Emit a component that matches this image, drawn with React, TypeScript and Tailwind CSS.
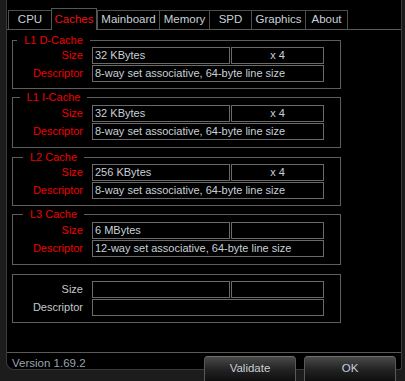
const tabs = [
  { name: 'CPU', w: 'w-[43px]' },
  { name: 'Caches', w: 'w-[46px]', active: true },
  { name: 'Mainboard', w: 'w-[62px]' },
  { name: 'Memory', w: 'w-[50px]' },
  { name: 'SPD', w: 'w-[42px]' },
  { name: 'Graphics', w: 'w-[54px]' },
  { name: 'About', w: 'w-[43px]', last: true },
];

interface CacheGroupProps {
  title?: string;
  size?: string;
  count?: string;
  descriptor?: string;
  h: string;
  mt: string;
}

function CacheGroup({ title, size, count, descriptor, h, mt }: CacheGroupProps) {
  const labelColor = title ? 'text-[#f00000]' : 'text-[#c4c8cc]';
  return (
    <div className={`relative w-[329px] ${h} ${mt} border border-[#5e5e5e] flex flex-col justify-center`}>
      {title && (
        <div className="absolute left-0 top-[-8px] w-[81px] flex justify-center">
          <span className="bg-black px-[7px] leading-[14px] text-[#f00000]">{title}</span>
        </div>
      )}
      <div className="flex items-center">
        <div className={`w-[70px] text-right ${labelColor}`}>Size</div>
        <div className="ml-[9px] w-[138px] h-[17px] border border-[#6a6a6a] pl-[2px] leading-[15px] text-[#c8d0d8]">
          {size}
        </div>
        <div className="ml-[1px] w-[93px] h-[17px] border border-[#6a6a6a] text-center leading-[15px] text-[#c8d0d8]">
          {count}
        </div>
      </div>
      <div className="flex items-center mt-[1px]">
        <div className={`w-[70px] text-right ${labelColor}`}>Descriptor</div>
        <div className="ml-[9px] w-[232px] h-[17px] border border-[#6a6a6a] pl-[2px] leading-[15px] text-[#c8d0d8]">
          {descriptor}
        </div>
      </div>
    </div>
  );
}

function App() {
  return (
    <div
      className="w-[405px] h-[381px] bg-[#1c1c1c] overflow-hidden text-[11px]"
      style={{ fontFamily: '"Liberation Sans", Arial, sans-serif' }}
    >
      <div className="ml-[6px] w-[396px] h-[370px] bg-black border-x border-b border-[#3a3a3a] rounded-bl-[8px] rounded-br-[3px] pt-[8px]">
        {/* tabs */}
        <div className="flex items-end h-[21px] ml-[1px]">
          {tabs.map((t) =>
            t.active ? (
              <div
                key={t.name}
                className={`${t.w} h-[22px] mb-[-1px] relative z-10 bg-black border-t border-l border-r border-[#565656] flex items-center justify-center text-[#f01010] text-[11.5px]`}
              >
                {t.name}
              </div>
            ) : (
              <div
                key={t.name}
                className={`${t.w} h-[19px] border-t border-l ${t.last ? 'border-r' : ''} border-[#4e4e4e] flex items-center justify-center text-[#c8d0d8] text-[11.5px]`}
              >
                {t.name}
              </div>
            )
          )}
        </div>

        {/* panel */}
        <div className="h-[324px] border-y border-[#5a5a5a] pt-[10px] pl-[5px] flex flex-col">
          <CacheGroup
            title="L1 D-Cache"
            size="32 KBytes"
            count="x 4"
            descriptor="8-way set associative, 64-byte line size"
            h="h-[49px]"
            mt="mt-0"
          />
          <CacheGroup
            title="L1 I-Cache"
            size="32 KBytes"
            count="x 4"
            descriptor="8-way set associative, 64-byte line size"
            h="h-[51px]"
            mt="mt-[8px]"
          />
          <CacheGroup
            title="L2 Cache"
            size="256 KBytes"
            count="x 4"
            descriptor="8-way set associative, 64-byte line size"
            h="h-[49px]"
            mt="mt-[9px]"
          />
          <CacheGroup
            title="L3 Cache"
            size="6 MBytes"
            count=""
            descriptor="12-way set associative, 64-byte line size"
            h="h-[51px]"
            mt="mt-[8px]"
          />
          <CacheGroup h="h-[49px]" mt="mt-[9px]" />
        </div>

        {/* bottom bar */}
        <div className="flex h-[17px]">
          <div className="pl-[5px] pt-[1px] leading-[18px] text-[#9aa4ae] text-[11.5px]">Version 1.69.2</div>
          <div className="ml-auto mr-[5px] flex gap-[8px] mt-[3px]">
            {['Validate', 'OK'].map((b) => (
              <button
                key={b}
                className="w-[92px] h-[28px] rounded-t-[4px] border border-[#585858] border-t-[#707070] bg-gradient-to-b from-[#4a4a4a] via-[#222222] to-[#0c0c0c] text-[#c8d0d8] text-[11.5px] leading-[22px] pb-[4px]"
              >
                {b}
              </button>
            ))}
          </div>
        </div>
      </div>
    </div>
  );
}

export default App;
